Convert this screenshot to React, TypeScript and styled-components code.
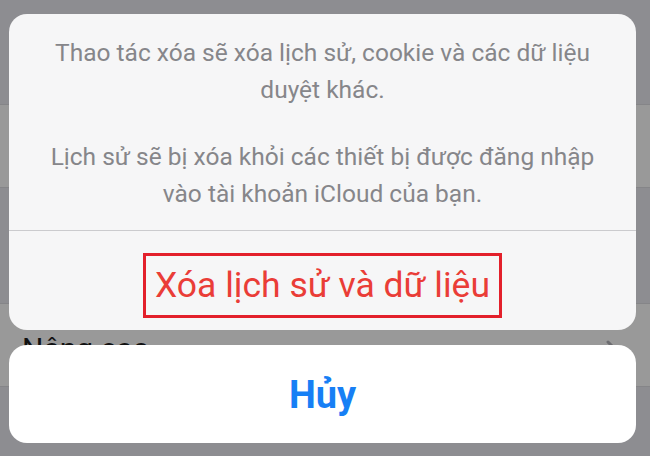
import React from "react";
import styled, { createGlobalStyle } from "styled-components";

const GlobalStyle = createGlobalStyle`
  html, body { margin: 0; padding: 0; }
  body {
    background: #8d8d91;
    font-family: Roboto, "Noto Sans", "Liberation Sans", sans-serif;
    -webkit-font-smoothing: antialiased;
  }
`;

const Screen = styled.div`
  position: relative;
  width: 650px;
  height: 456px;
  overflow: hidden;
  background: #8d8d91;
`;

const List = styled.div`
  display: flex;
  flex-direction: column;
  height: 100%;
`;

const GroupGap = styled.div<{ $h?: number }>`
  height: ${(p) => (p.$h ? `${p.$h}px` : "auto")};
  flex: ${(p) => (p.$h ? "0 0 auto" : "1 1 auto")};
  background: #8d8d91;
`;

const Cell = styled.div`
  height: 84px;
  background: #999999;
  border-top: 1px solid #858588;
  border-bottom: 1px solid #858588;
  display: flex;
  align-items: center;
  justify-content: space-between;
  padding: 0 30px 0 22px;
  box-sizing: border-box;
`;

const CellLabel = styled.span`
  font-size: 30px;
  color: #111;
  margin-top: 6px;
`;

const Chevron = styled.svg`
  width: 14px;
  height: 24px;
  margin-top: 14px;
`;

const Overlay = styled.div`
  position: absolute;
  inset: 0;
  box-sizing: border-box;
  padding: 13px 14px 13px 9px;
  display: flex;
  flex-direction: column;
  justify-content: flex-end;
  gap: 15px;
`;

const Sheet = styled.div`
  background: #f6f6f7;
  border-radius: 18px;
  overflow: hidden;
  display: flex;
  flex-direction: column;
`;

const Message = styled.div`
  height: 217px;
  box-sizing: border-box;
  padding: 20px 30px 0;
  border-bottom: 1px solid #cbcbce;
  display: flex;
  flex-direction: column;
  gap: 30px;
`;

const Para = styled.p`
  margin: 0;
  text-align: center;
  color: #86868a;
  font-size: 24.5px;
  line-height: 37px;
`;

const ActionRow = styled.div`
  height: 99px;
  display: flex;
  align-items: center;
  justify-content: center;
`;

const Highlight = styled.div`
  border: 3px solid #e3202b;
  padding: 6px 9px 7px 9px;
  margin-top: 10px;
  display: flex;
`;

const DestructiveLabel = styled.span`
  color: #ea3d37;
  font-size: 35.5px;
  line-height: 46px;
`;

const CancelCard = styled.div`
  height: 98px;
  background: #ffffff;
  border-radius: 18px;
  display: flex;
  align-items: center;
  justify-content: center;
`;

const CancelLabel = styled.span`
  color: #177ff5;
  font-size: 38px;
  font-weight: 700;
  margin-top: 2px;
`;

export default function App() {
  return (
    <>
      <GlobalStyle />
      <Screen>
        <List>
          <GroupGap $h={104} />
          <Cell />
          <GroupGap $h={115} />
          <Cell>
            <CellLabel>Nâng cao</CellLabel>
            <Chevron viewBox="0 0 14 24">
              <path d="M2 2 L12 12 L2 22" fill="none" stroke="#6c6c70" strokeWidth="3" strokeLinecap="round" strokeLinejoin="round" />
            </Chevron>
          </Cell>
          <GroupGap />
        </List>
        <Overlay>
          <Sheet>
            <Message>
              <Para>Thao tác xóa sẽ xóa lịch sử, cookie và các dữ liệu duyệt khác.</Para>
              <Para>Lịch sử sẽ bị xóa khỏi các thiết bị được đăng nhập vào tài khoản iCloud của bạn.</Para>
            </Message>
            <ActionRow>
              <Highlight>
                <DestructiveLabel>Xóa lịch sử và dữ liệu</DestructiveLabel>
              </Highlight>
            </ActionRow>
          </Sheet>
          <CancelCard>
            <CancelLabel>Hủy</CancelLabel>
          </CancelCard>
        </Overlay>
      </Screen>
    </>
  );
}
